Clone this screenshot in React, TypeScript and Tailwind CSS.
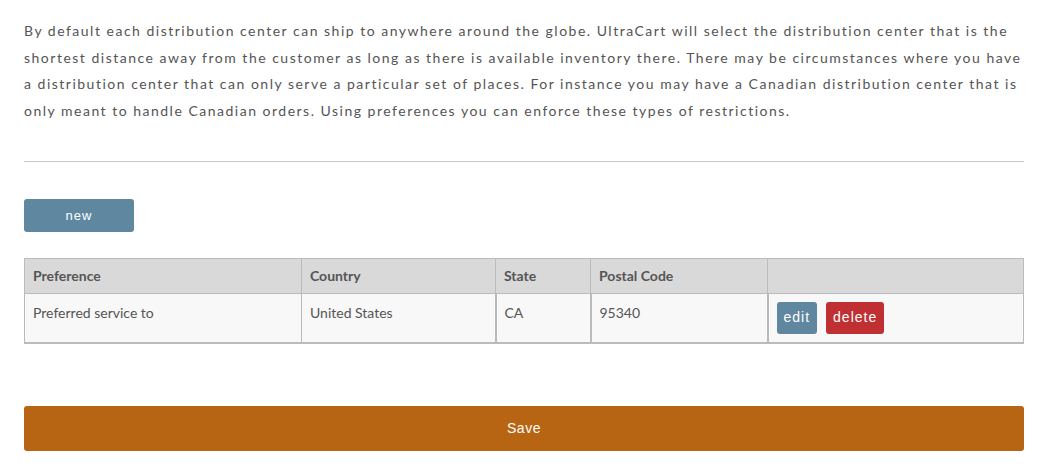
const rows = [
  { preference: "Preferred service to", country: "United States", state: "CA", postal: "95340" },
];

const cols = ["w-[277px]", "w-[194px]", "w-[95px]", "w-[177px]", ""];

export default function App() {
  return (
    <div className="bg-white min-h-[471px] pl-6 pr-5 pt-[18px] font-['Lato','Open_Sans',sans-serif] text-[#555]">
      {/* Intro */}
      <p className="text-[14px] leading-[26.7px] tracking-[1.5px]">
        By default each distribution center can ship to anywhere around the globe. UltraCart will select the distribution center that is the shortest distance away from the customer as long as there is available inventory there. There may be circumstances where you have a distribution center that can only serve a particular set of places. For instance you may have a Canadian distribution center that is only meant to handle Canadian orders. Using preferences you can enforce these types of restrictions.
      </p>

      <hr className="mt-[36px] border-0 border-t border-[#c8c8c8]" />

      <button className="mt-[37px] w-[110px] h-[33px] rounded-[3px] bg-[#5f87a0] text-white text-[13px] tracking-[1px] font-['Liberation_Sans',Arial,sans-serif]">
        new
      </button>

      {/* Preferences table */}
      <table className="mt-[26px] w-full border-collapse text-[14px] border border-[#bbb] border-b-2">
        <thead>
          <tr className="bg-[#d9d9d9] h-[35px]">
            {["Preference", "Country", "State", "Postal Code", ""].map((h, i) => (
              <th key={i} className={`${cols[i]} border border-[#bbb] px-2 text-left font-bold text-[#555]`}>
                {h}
              </th>
            ))}
          </tr>
        </thead>
        <tbody>
          {rows.map((r, idx) => (
            <tr key={idx} className="bg-[#f8f8f8] h-[50px]">
              <td className="border border-[#bbb] px-2 pt-[8px] align-top">{r.preference}</td>
              <td className="border border-[#bbb] px-2 pt-[8px] align-top">{r.country}</td>
              <td className="border border-x-2 border-[#bbb] px-2 pt-[8px] align-top">{r.state}</td>
              <td className="border border-r-2 border-[#bbb] px-2 pt-[8px] align-top">{r.postal}</td>
              <td className="border border-[#bbb] px-2 pt-[8px] align-top">
                <div className="flex gap-[9px] font-['Liberation_Sans',Arial,sans-serif] text-[14px] tracking-[1px] text-white">
                  <button className="h-[32px] px-[7px] rounded-[3px] bg-[#5f87a0]">edit</button>
                  <button className="h-[32px] px-[7px] rounded-[3px] bg-[#c03033]">delete</button>
                </div>
              </td>
            </tr>
          ))}
        </tbody>
      </table>

      <button className="mt-[62px] w-full h-[45px] rounded-[3px] bg-[#b76413] text-white text-[14px] tracking-[0.5px] font-['Liberation_Sans',Arial,sans-serif]">
        Save
      </button>
    </div>
  );
}
